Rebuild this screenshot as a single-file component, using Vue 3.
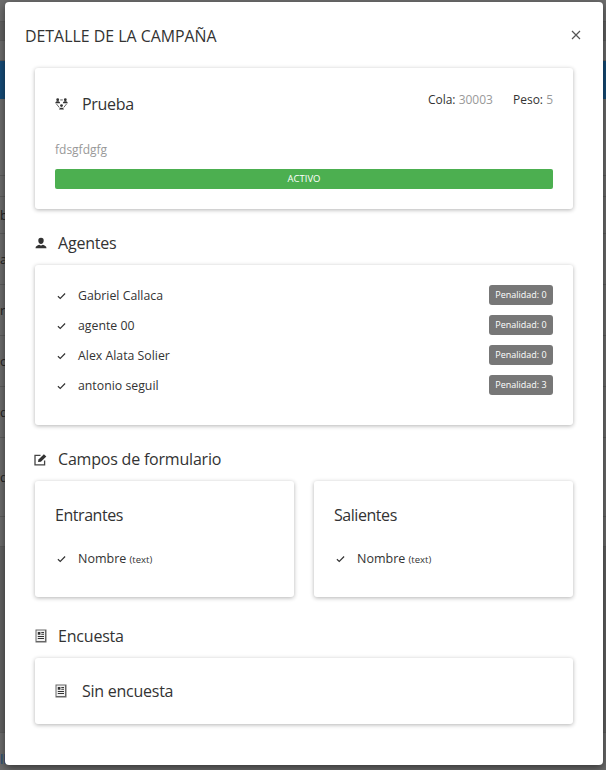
<template>
  <div class="page">
    <!-- dimmed page behind the modal -->
    <div class="behind">
      <div
        v-for="r in bgRows"
        :key="r.h + r.bg + r.t"
        class="bg-row"
        :class="r.bg"
        :style="{ height: r.h + 'px', lineHeight: r.h + 'px' }"
      >{{ r.t }}</div>
    </div>

    <div class="modal">
      <div class="modal-header">
        <h4>DETALLE DE LA CAMPAÑA</h4>
        <svg class="close" viewBox="0 0 10 10" width="10" height="10">
          <path d="M1 1 9 9M9 1 1 9" stroke="#555" stroke-width="1.2" fill="none" />
        </svg>
      </div>

      <div class="card card-main">
        <div class="main-top">
          <div class="title">
            <svg class="ico-group" viewBox="0 0 13 11.500" width="13" height="12">
              <circle cx="2.700" cy="1.500" r="1.400" fill="#333" />
              <circle cx="10.300" cy="1.500" r="1.400" fill="#333" />
              <circle cx="6.500" cy="7.300" r="1.400" fill="#333" />
              <path d="M.3 4.900c0-1.200 1-1.800 2.400-1.800s2.400.6 2.400 1.800ZM7.900 4.900c0-1.200 1-1.800 2.400-1.800s2.400.6 2.400 1.800ZM4.100 11.300c0-1.200 1-1.800 2.400-1.800s2.400.6 2.400 1.800Z" fill="#333" />
              <path d="M1.300 5.500 4.300 9.300M11.700 5.500 8.700 9.300M5.200 1.700h2.600" stroke="#555" stroke-width=".9" fill="none" />
            </svg>
            <span>Prueba</span>
          </div>
          <div class="meta">
            <span>Cola: <em>30003</em></span>
            <span>Peso: <em>5</em></span>
          </div>
        </div>
        <p class="desc">fdsgfdgfg</p>
        <div class="status">ACTIVO</div>
      </div>

      <h5 class="section">
        <svg viewBox="0 0 12 12" width="12" height="12">
          <path d="M6 .8a2.700 2.700 0 0 1 2.700 2.900C8.700 5.400 7.600 7 6 7S3.300 5.400 3.300 3.700A2.700 2.700 0 0 1 6 .8ZM.5 11.200c0-2 2-2.900 3.700-3.400.6.500 1.100.7 1.800.7s1.200-.2 1.800-.7c1.700.5 3.700 1.400 3.700 3.400Z" fill="#333" />
        </svg>
        Agentes
      </h5>
      <div class="card card-agents">
        <div v-for="a in agents" :key="a.name" class="agent">
          <svg class="check" viewBox="0 0 10 8" width="9" height="8">
            <path d="M1 4.300 3.600 6.800 9 1.200" stroke="#333" stroke-width="1.300" fill="none" />
          </svg>
          <span class="agent-name">{{ a.name }}</span>
          <span class="badge">Penalidad: {{ a.pen }}</span>
        </div>
      </div>

      <h5 class="section">
        <svg class="ico-edit" viewBox="0 0 13 13" width="13" height="13">
          <path d="M10.600 7.500V11.900H1V2.400H6.500" stroke="#444" stroke-width="1.300" fill="none" />
          <path d="M4 9.100 4.500 6.600 9.900 1.200 12.300 3.500 6.900 8.800Z" fill="#333" />
        </svg>
        Campos de formulario
      </h5>
      <div class="fields">
        <div v-for="f in fields" :key="f" class="card card-field">
          <div class="field-title">{{ f }}</div>
          <div class="field-row">
            <svg class="check" viewBox="0 0 10 8" width="9" height="8">
              <path d="M1 4.300 3.600 6.800 9 1.200" stroke="#333" stroke-width="1.300" fill="none" />
            </svg>
            <span>Nombre <small>(text)</small></span>
          </div>
        </div>
      </div>

      <h5 class="section section-last">
        <svg viewBox="0 0 12 14" width="12" height="14">
          <path d="M.5.500h11v13H.5Z" fill="#666" />
          <path d="M1.500 1.500h8.500v10.500H1.500Z" fill="#f2f2f2" />
          <path d="M2.800 3h2.600v2.800H2.800ZM6.300 3H9v1H6.300ZM6.300 4.800H9v1H6.300ZM2.800 7H9v.9H2.800ZM2.800 9H9v.9H2.800Z" fill="#333" />
        </svg>
        Encuesta
      </h5>
      <div class="card card-survey">
        <svg viewBox="0 0 12 14" width="12" height="14">
          <path d="M.5.500h11v13H.5Z" fill="#666" />
          <path d="M1.500 1.500h8.500v10.500H1.500Z" fill="#f2f2f2" />
          <path d="M2.800 3h2.600v2.800H2.800ZM6.300 3H9v1H6.300ZM6.300 4.800H9v1H6.300ZM2.800 7H9v.9H2.800ZM2.800 9H9v.9H2.800Z" fill="#333" />
        </svg>
        <span>Sin encuesta</span>
      </div>
    </div>
  </div>
</template>

<script setup>
const bgRows = [
  { h: 22, bg: '', t: '' },
  { h: 19, bg: 'dark', t: '' },
  { h: 20, bg: '', t: '' },
  { h: 38, bg: 'blue', t: '' },
  { h: 77, bg: '', t: '' },
  { h: 21, bg: '', t: '' },
  { h: 37, bg: '', t: 'b' },
  { h: 51, bg: '', t: 'a' },
  { h: 51, bg: '', t: 'r' },
  { h: 51, bg: '', t: 'o' },
  { h: 51, bg: '', t: 'd' },
  { h: 79, bg: '', t: 'd' },
  { h: 30, bg: '', t: '' },
  { h: 186, bg: 'dark', t: '' },
  { h: 37, bg: 'foot', t: 'll' },
]

const agents = [
  { name: 'Gabriel Callaca', pen: 0 },
  { name: 'agente 00', pen: 0 },
  { name: 'Alex Alata Solier', pen: 0 },
  { name: 'antonio seguil', pen: 3 },
]

const fields = ['Entrantes', 'Salientes']
</script>

<style>
html, body {
  margin: 0;
  height: 100%;
  overflow: hidden;
  background: #6d6d6d;
}
</style>

<style scoped>
.page {
  width: 606px;
  height: 770px;
  position: relative;
  overflow: hidden;
  font-family: "Open Sans", "Noto Sans", sans-serif;
  color: #333;
}

.behind {
  background: #6d6d6d;
  color: #222;
  font-size: 13px;
}
.bg-row {
  box-sizing: border-box;
  border-bottom: 1px solid #5c5c5c;
}
.bg-row.dark {
  background: #626262;
}
.bg-row.blue {
  background: #164c78;
  border-bottom: 0;
}
.bg-row.foot {
  color: #164c78;
  border-bottom: 0;
  padding-top: 8px;
}

.modal {
  position: absolute;
  left: 5px;
  top: 2px;
  width: 598px;
  height: 763px;
  box-sizing: border-box;
  padding: 0 30px;
  background: #fff;
  border-radius: 4px;
  box-shadow: 0 3px 9px rgba(0, 0, 0, 0.5);
}

.modal-header {
  display: flex;
  align-items: center;
  justify-content: space-between;
  height: 66px;
  margin: 0 -8px 0 -10px;
}
.modal-header h4 {
  margin: 0;
  padding-top: 1px;
  font-size: 15.900px;
  font-weight: 400;
  color: #333;
}

.card {
  background: #fff;
  border-radius: 3px;
  box-shadow: 0 1px 4px rgba(0, 0, 0, 0.3);
  box-sizing: border-box;
}

.card-main {
  height: 141px;
  padding: 0 20px;
}
.main-top {
  display: flex;
  justify-content: space-between;
  height: 66px;
  padding-top: 22px;
  box-sizing: border-box;
}
.title {
  display: flex;
  align-items: center;
  height: 28px;
  font-size: 16px;
  letter-spacing: -0.3px;
}
.ico-group {
  margin-right: 14px;
}
.meta {
  display: flex;
  gap: 20px;
  font-size: 12px;
  line-height: 20px;
}
.meta em {
  font-style: normal;
  color: #999;
}
.desc {
  margin: 0;
  padding-top: 8px;
  font-size: 12px;
  line-height: 16px;
  color: #999;
}
.status {
  margin-top: 11px;
  height: 20px;
  line-height: 20px;
  background: #4caf50;
  border-radius: 2px;
  color: #fff;
  font-size: 9.500px;
  text-align: center;
}

.section {
  display: flex;
  align-items: center;
  gap: 11px;
  height: 22px;
  margin: 23px 0 11px;
  font-size: 16px;
  font-weight: 400;
  letter-spacing: -0.2px;
  color: #333;
}
.section-last {
  margin-top: 28px;
}
.ico-edit {
  margin-left: -1px;
}

.card-agents {
  height: 160px;
  padding: 20px 20px 0;
}
.agent {
  display: flex;
  align-items: center;
  height: 20px;
  margin-bottom: 10px;
  font-size: 12.300px;
}
.check {
  margin: 2px 12px 0 2px;
  flex-shrink: 0;
}
.agent-name {
  flex: 1;
}
.badge {
  width: 64px;
  height: 20px;
  line-height: 20px;
  background: #777;
  border-radius: 3px;
  color: #fff;
  font-size: 9px;
  text-align: center;
}

.fields {
  display: grid;
  grid-template-columns: 259px 259px;
  gap: 20px;
}
.card-field {
  height: 116px;
  padding: 0 20px;
}
.field-title {
  padding-top: 23px;
  font-size: 16px;
  line-height: 22px;
  letter-spacing: -0.45px;
}
.field-row {
  display: flex;
  align-items: center;
  margin-top: 24px;
  font-size: 12.500px;
  line-height: 18px;
}
.field-row .check {
  margin-top: -2px;
}
.field-row small {
  font-size: 9.500px;
}

.card-survey {
  display: flex;
  align-items: center;
  height: 66px;
  padding: 0 20px;
  font-size: 16px;
  letter-spacing: -0.25px;
}
.card-survey span {
  margin-left: 15px;
}
</style>
